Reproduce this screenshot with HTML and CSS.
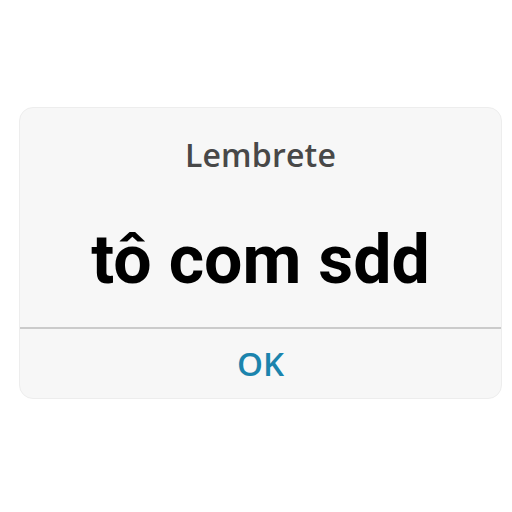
FILE: index.html
```html
<!DOCTYPE html>
<html lang="pt">
<head>
<meta charset="utf-8">
<link rel="stylesheet" href="styles.css">
</head>
<body>
<div class="page">
  <div class="dialog">
    <div class="title">Lembrete</div>
    <div class="message">tô com sdd</div>
    <div class="actions"><span class="ok">OK</span></div>
  </div>
</div>
</body>
</html>
```
FILE: styles.css
```css
html, body {
  margin: 0;
  padding: 0;
  background: #ffffff;
}
.page {
  width: 512px;
  height: 512px;
  padding-top: 107px;
  padding-left: 19px;
  box-sizing: border-box;
}
.dialog {
  width: 483px;
  height: 292px;
  box-sizing: border-box;
  background: #f7f7f7;
  border: 1px solid #ededed;
  border-radius: 14px;
  display: flex;
  flex-direction: column;
  overflow: hidden;
}
.title {
  font-family: "Open Sans", sans-serif;
  font-weight: 600;
  font-size: 32px;
  line-height: 44px;
  letter-spacing: 0.2px;
  color: #484848;
  text-align: center;
  padding-top: 25px;
}
.message {
  font-family: Roboto, "Liberation Sans", sans-serif;
  font-weight: 700;
  font-size: 68px;
  line-height: 67px;
  color: #000000;
  text-align: center;
  margin-top: 50px;
}
.actions {
  margin-top: auto;
  height: 69px;
  border-top: 2px solid #cbcbcb;
  display: flex;
  align-items: center;
  justify-content: center;
}
.ok {
  font-family: "Open Sans", sans-serif;
  font-weight: 600;
  font-size: 33px;
  line-height: 33px;
  color: #1b84ad;
}
```
